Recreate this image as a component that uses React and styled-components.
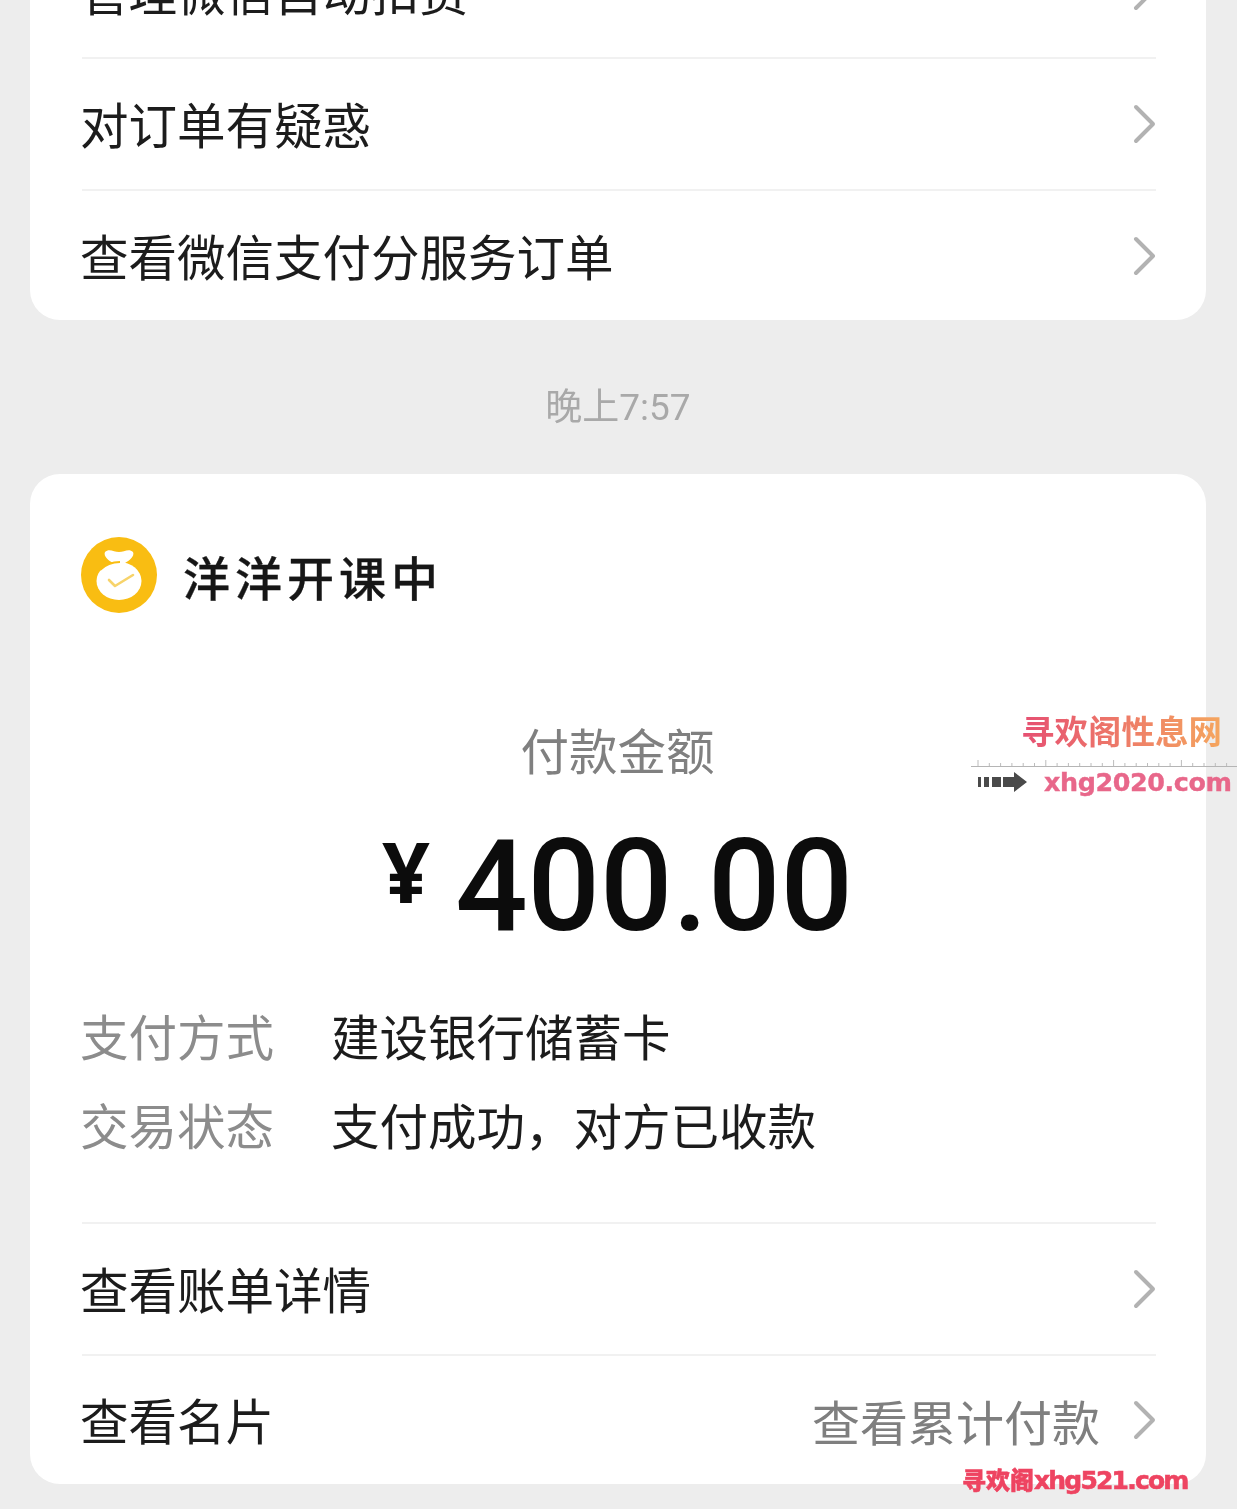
import React from "react";
import styled, { createGlobalStyle } from "styled-components";

const Global = createGlobalStyle`
  html, body { margin: 0; padding: 0; background: #ededed; }
  * { box-sizing: border-box; }
`;

const CJK = `"Noto Sans CJK SC", "Noto Sans", sans-serif`;

const Page = styled.div`
  position: relative;
  width: 1237px;
  height: 1509px;
  overflow: hidden;
  background: #ededed;
  font-family: ${CJK};
  color: #1c1c1c;
  padding: 0 31px 0 30px;
  filter: blur(0.5px);
`;

const Card = styled.section`
  background: #fff;
  border-radius: 30px;
  padding: 0 50px 0 52px;
  margin-top: ${(p) => p.$top || 0}px;
`;

const Row = styled.div`
  display: flex;
  align-items: center;
  height: ${(p) => p.$h || 132}px;
  border-top: ${(p) => (p.$first ? "none" : "2px solid #f1f1f1")};
  font-size: 48.5px;
  line-height: 1;
`;

const RowLabel = styled.span`
  flex: 1;
  white-space: nowrap;
  margin-left: -2px;
  padding-bottom: 1px;
`;

const RowHint = styled.span`
  color: #7f7f7f;
  margin-right: 33px;
  font-size: 48px;
  white-space: nowrap;
  padding-bottom: 1px;
`;

const Chevron = styled.svg`
  width: 23px;
  height: 40px;
  flex: none;
  display: block;
`;

const Time = styled.div`
  height: 154px;
  padding-top: 66px;
  text-align: center;
  font-size: 37px;
  line-height: 44px;
  color: #a9a9a9;
  font-family: Roboto, ${CJK};
`;

const Merchant = styled.header`
  display: flex;
  align-items: center;
  gap: 26px;
  padding-top: 63px;
  margin-left: -1px;
`;

const MerchantLogo = styled.svg`
  width: 76px;
  height: 76px;
  flex: none;
`;

const MerchantName = styled.h2`
  margin: 0;
  font-size: 47px;
  font-weight: 500;
  letter-spacing: 5px;
  line-height: 1;
  color: #161616;
  -webkit-text-stroke: 0.3px #161616;
`;

const Payment = styled.div`
  margin-top: 106px;
  text-align: center;
`;

const PayTitle = styled.div`
  font-size: 48.5px;
  line-height: 60px;
  color: #808080;
  margin-left: -3px;
`;

const Amount = styled.div`
  display: flex;
  justify-content: center;
  align-items: flex-start;
  height: 150px;
  margin-top: 33px;
  margin-left: -3px;
  font-family: Roboto, sans-serif;
  color: #0c0c0c;
`;

const Yen = styled.span`
  font-size: 84px;
  font-weight: 700;
  line-height: 96px;
  margin-top: 11px;
  margin-right: 25px;
  font-family: "Noto Sans", Roboto, sans-serif;
`;

const Figure = styled.span`
  font-size: 127.5px;
  font-weight: 500;
  line-height: 150px;
`;

const Info = styled.div`
  display: grid;
  grid-template-columns: 251px 1fr;
  grid-auto-rows: 89px;
  align-items: center;
  font-size: 48.5px;
  line-height: 1;
  margin-top: 29px;
  margin-left: -2px;
  padding-bottom: 53px;
`;

const InfoKey = styled.span`
  color: #8c8c8c;
`;

const InfoValue = styled.span`
  color: #1c1c1c;
  white-space: nowrap;
`;

const BrandMark = styled.div`
  position: absolute;
  left: 971px;
  top: 712px;
  width: 266px;
`;

const BrandTitle = styled.div`
  margin-left: 50px;
  width: max-content;
  font-family: "Liberation Serif", "Noto Sans CJK SC", serif;
  font-size: 33.5px;
  font-weight: 700;
  line-height: 42px;
  background: linear-gradient(90deg, #e64f72, #f5a65e);
  -webkit-background-clip: text;
  background-clip: text;
  color: transparent;
`;

const Ruler = styled.svg`
  display: block;
  width: 266px;
  height: 10px;
  margin-top: 4px;
`;

const BrandLine = styled.div`
  display: flex;
  align-items: center;
  padding-left: 7px;
  height: 32px;
  margin-top: -2px;
`;

const Arrow = styled.svg`
  width: 49px;
  height: 20px;
  flex: none;
`;

const BrandUrl = styled.span`
  margin-left: 17px;
  font-family: "DejaVu Sans", sans-serif;
  font-weight: 700;
  font-size: 25.4px;
  line-height: 32px;
  letter-spacing: -0.4px;
  color: #e8678a;
  white-space: nowrap;
  -webkit-text-stroke: 0.4px #e8678a;
`;

const Stamp = styled.div`
  position: absolute;
  left: 962px;
  top: 1463px;
  font-family: "Noto Sans CJK SC", sans-serif;
  font-size: 24px;
  font-weight: 900;
  line-height: 32px;
  color: #ee4461;
  -webkit-text-stroke: 0.6px #ee4461;
  white-space: nowrap;
`;

const StampLatin = styled.span`
  font-family: "DejaVu Sans", sans-serif;
  font-weight: 700;
  font-size: 25px;
  letter-spacing: -1.8px;
`;

const ChevronIcon = () => (
  <Chevron viewBox="0 0 23 40" aria-hidden="true">
    <polyline points="3,3 20,20 3,37" fill="none" stroke="#b2b2b2" strokeWidth="4" strokeLinecap="round" strokeLinejoin="round" />
  </Chevron>
);

const ticks = Array.from({ length: 24 }, (_, i) => i);

export default function App() {
  return (
    <Page>
      <Global />
      <Card $top={-75}>
        <Row $first>
          <RowLabel>管理微信自动扣费</RowLabel>
          <ChevronIcon />
        </Row>
        <Row>
          <RowLabel>对订单有疑惑</RowLabel>
          <ChevronIcon />
        </Row>
        <Row $h={131}>
          <RowLabel>查看微信支付分服务订单</RowLabel>
          <ChevronIcon />
        </Row>
      </Card>

      <Time>晚上7:57</Time>

      <Card>
        <Merchant>
          <MerchantLogo viewBox="0 0 76 76" aria-hidden="true">
            <circle cx="38" cy="38" r="38" fill="#f9bd12" />
            <path d="M24 15c4-4 9 0 14 0s10-4 14 0c2 4-4 9-8 11H32c-4-2-10-7-8-11z" fill="#fff" />
            <ellipse cx="38" cy="44" rx="22.5" ry="19" fill="#fff" />
            <path d="M19 33c5-5 12-8 20-8" fill="none" stroke="#f9bd12" strokeWidth="1.8" />
            <polyline points="28,43 34,49 52,38" fill="none" stroke="#f7d36a" strokeWidth="2.6" strokeLinecap="round" strokeLinejoin="round" />
          </MerchantLogo>
          <MerchantName>洋洋开课中</MerchantName>
        </Merchant>

        <Payment>
          <PayTitle>付款金额</PayTitle>
          <Amount>
            <Yen>¥</Yen>
            <Figure>400.00</Figure>
          </Amount>
        </Payment>

        <Info>
          <InfoKey>支付方式</InfoKey>
          <InfoValue>建设银行储蓄卡</InfoValue>
          <InfoKey>交易状态</InfoKey>
          <InfoValue>支付成功，对方已收款</InfoValue>
        </Info>

        <Row>
          <RowLabel>查看账单详情</RowLabel>
          <ChevronIcon />
        </Row>
        <Row $h={130}>
          <RowLabel>查看名片</RowLabel>
          <RowHint>查看累计付款</RowHint>
          <ChevronIcon />
        </Row>
      </Card>

      <BrandMark>
        <BrandTitle>寻欢阁性息网</BrandTitle>
        <Ruler viewBox="0 0 266 10" aria-hidden="true">
          <line x1="0" y1="8.5" x2="266" y2="8.5" stroke="#b5b5b5" strokeWidth="1" />
          {ticks.map((i) => (
            <line key={i} x1={7 + i * 11.3} x2={7 + i * 11.3} y1={i % 6 === 0 ? 2 : 5} y2="8" stroke="#bcbcbc" strokeWidth="1" />
          ))}
        </Ruler>
        <BrandLine>
          <Arrow viewBox="0 0 49 20" aria-hidden="true">
            <path d="M0 5h3v10H0zM6 5h5v10H6zM14 5h9v10h-9zM25 5h11V0l13 10-13 10v-5H25z" fill="#4a4a4a" />
          </Arrow>
          <BrandUrl>xhg2020.com</BrandUrl>
        </BrandLine>
      </BrandMark>

      <Stamp>
        寻欢阁<StampLatin>xhg521.com</StampLatin>
      </Stamp>
    </Page>
  );
}
